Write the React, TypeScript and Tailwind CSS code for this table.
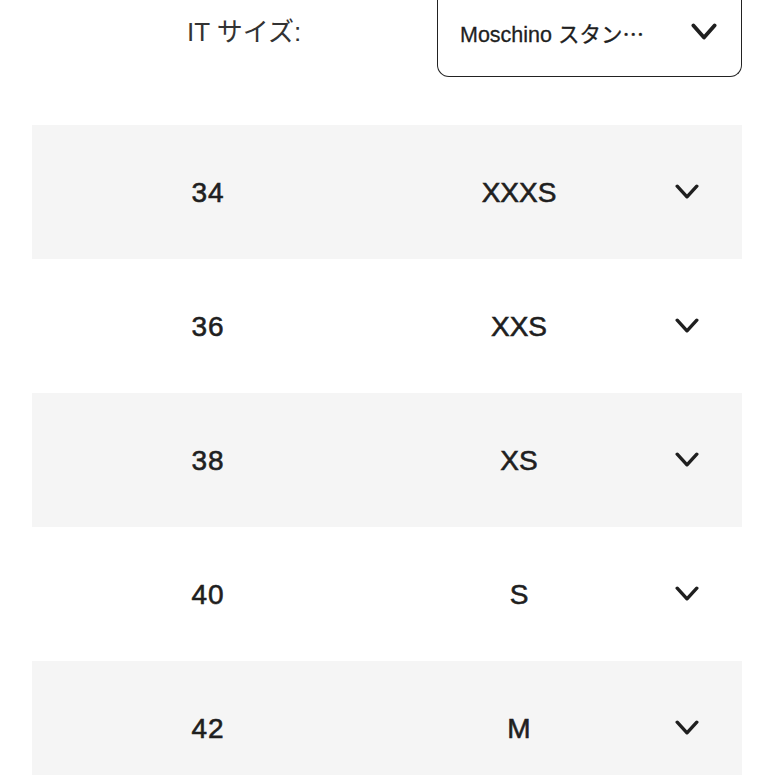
import React from "react";

const Chevron = ({ w, h, sw }: { w: number; h: number; sw: number }) => (
  <svg width={w} height={h} viewBox={`0 0 ${w} ${h}`} fill="none">
    <path
      d={`M${sw / 2 + 0.5} ${sw / 2 + 0.5} L${w / 2} ${h - sw / 2 - 0.5} L${w - sw / 2 - 0.5} ${sw / 2 + 0.5}`}
      stroke="#1f1f1f"
      strokeWidth={sw}
      strokeLinecap="round"
      strokeLinejoin="round"
    />
  </svg>
);

const rows = [
  ["34", "XXXS"],
  ["36", "XXS"],
  ["38", "XS"],
  ["40", "S"],
  ["42", "M"],
];

export default function App() {
  return (
    <div
      className="w-[775px] h-[775px] overflow-hidden bg-white text-[#1f1f1f]"
      style={{ fontFamily: '"Liberation Sans", "Noto Sans CJK JP", sans-serif' }}
    >
      <div className="flex h-[125px]">
        <div className="w-[437px] pl-[187px] pt-[14px] text-[26px] text-[#333] leading-[36px]">
          IT サイズ:
        </div>
        <div className="w-[305px] h-[77px] border-x-[1.5px] border-b-[1.5px] border-[#222] rounded-b-[12px] flex items-center pl-[22px] pr-[24px] pb-[8px]">
          <span className="flex-1 text-[21.5px] leading-none [-webkit-text-stroke:0.3px_#1f1f1f]">
            Moschino スタン
            <span style={{ fontFamily: '"Noto Sans CJK JP", sans-serif' }}>⋯</span>
          </span>
          <div className="mb-[6px]">
            <Chevron w={26} h={17} sw={3.8} />
          </div>
        </div>
      </div>
      <div className="ml-[32px] w-[710px]">
        {rows.map(([a, b], i) => (
          <div
            key={a}
            className={`flex items-center h-[134px] ${i % 2 === 0 ? "bg-[#f5f5f5]" : "bg-white"}`}
          >
            <div className="w-[352px] text-center text-[28px] pt-[2px] tracking-[1px] [-webkit-text-stroke:0.6px_#1f1f1f]">{a}</div>
            <div className="w-[270px] text-center text-[28px] pt-[2px] [-webkit-text-stroke:0.6px_#1f1f1f]">{b}</div>
            <div className="pl-[21px] mb-[2px]">
              <Chevron w={24} h={15} sw={3.4} />
            </div>
          </div>
        ))}
      </div>
    </div>
  );
}
